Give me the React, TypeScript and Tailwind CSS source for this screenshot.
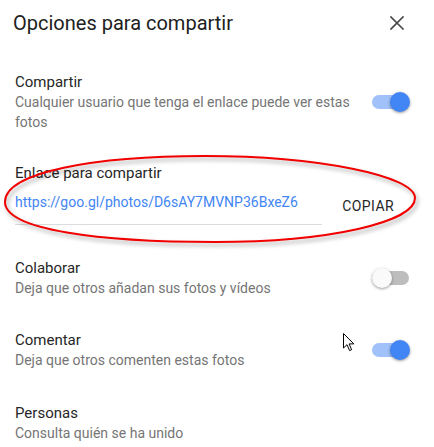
import React from "react";

function Toggle({ on }: { on: boolean }) {
  return (
    <div className="relative w-[38px] h-[20px] shrink-0">
      <div
        className={
          "absolute left-0 right-[1px] top-[3px] h-[14px] rounded-full " +
          (on ? "bg-[#a0c1f9]" : "bg-[#bdbdbd]")
        }
      />
      <div
        className={
          "absolute top-0 w-[20px] h-[20px] rounded-full shadow-[0_1px_3px_rgba(0,0,0,0.4)] " +
          (on ? "right-0 bg-[#4285f4]" : "left-0 bg-[#fafafa]")
        }
      />
    </div>
  );
}

function Row({
  title,
  desc,
  toggle,
  className = "",
}: {
  title: string;
  desc: string;
  toggle?: boolean;
  className?: string;
}) {
  return (
    <div className={"flex items-center pl-[15px] pr-[24px] " + className}>
      <div className="flex-1 pr-[16px]">
        <div className="text-[15px] leading-[20px] text-[#262626]">{title}</div>
        <div className="text-[14px] leading-[20px] text-[#757575]">{desc}</div>
      </div>
      {toggle !== undefined && <Toggle on={toggle} />}
    </div>
  );
}

export default function App() {
  return (
    <div className="relative w-[434px] h-[447px] bg-white overflow-hidden font-['Roboto',sans-serif]">
      {/* Header */}
      <div className="flex items-center justify-between pl-[13px] pr-[30px] pt-[9px]">
        <div className="text-[20px] leading-[28px] text-[#212121]">Opciones para compartir</div>
        <svg width="14" height="14" viewBox="0 0 14 14" className="mt-[-1px]">
          <path d="M1 1 L13 13 M13 1 L1 13" stroke="#4a4a4a" strokeWidth="1.7" strokeLinecap="square" />
        </svg>
      </div>

      <Row
        className="mt-[35px]"
        title="Compartir"
        desc="Cualquier usuario que tenga el enlace puede ver estas fotos"
        toggle={true}
      />

      {/* Link section */}
      <div className="flex items-start pl-[15px] pr-[40px] mt-[31px]">
        <div className="w-[307px]">
          <div className="text-[15px] leading-[20px] text-[#262626]">Enlace para compartir</div>
          <div className="mt-[9px] text-[14px] leading-[20px] text-[#4285f4]">
            https://goo.gl/photos/D6sAY7MVNP36BxeZ6
          </div>
          <div className="mt-[12px] h-px bg-[#dcdcdc]" />
        </div>
        <div className="ml-auto mt-[33px] text-[14px] leading-[20px] font-normal tracking-[0.4px] text-[#262626]">
          COPIAR
        </div>
      </div>

      <Row className="mt-[33px]" title="Colaborar" desc="Deja que otros añadan sus fotos y vídeos" toggle={false} />
      <Row className="mt-[32px]" title="Comentar" desc="Deja que otros comenten estas fotos" toggle={true} />
      <Row className="mt-[33px]" title="Personas" desc="Consulta quién se ha unido" />

      {/* Red ellipse annotation */}
      <svg
        className="absolute left-0 top-0 pointer-events-none drop-shadow-[2px_3px_2px_rgba(0,0,0,0.35)]"
        width="434"
        height="447"
        viewBox="0 0 434 447"
      >
        <path
          d="M 5 202 C 5 172, 95 156, 205 156 C 318 156, 415 176, 415 198 C 415 222, 330 242, 215 242 C 100 242, 5 230, 5 202 Z"
          fill="none"
          stroke="#f20000"
          strokeWidth="2"
        />
      </svg>

      {/* Mouse cursor */}
      <svg className="absolute left-[343px] top-[333px]" width="13" height="19" viewBox="0 0 13 19">
        <path
          d="M0.5 0.5 L0.5 15 L4 11.7 L6.6 17.6 L8.6 16.7 L6.1 10.9 L10.8 10.9 Z"
          fill="#fff"
          stroke="#000"
          strokeWidth="1"
          strokeLinejoin="miter"
        />
      </svg>
    </div>
  );
}
